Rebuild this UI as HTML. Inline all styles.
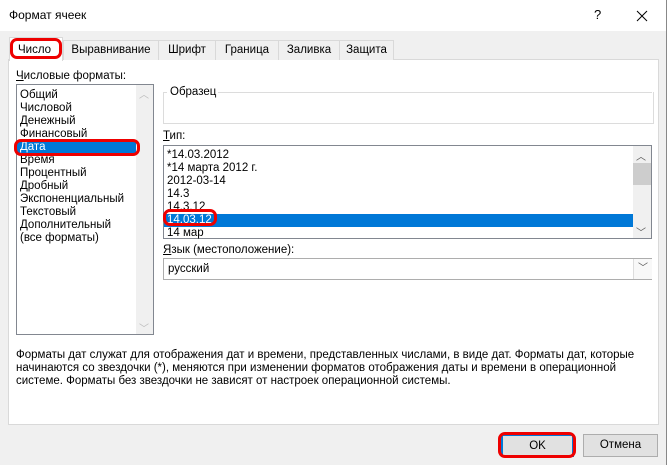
<!DOCTYPE html><html><head><meta charset="utf-8"><style>
body{margin:0;width:667px;height:465px;overflow:hidden;font-family:"Liberation Sans",sans-serif;font-size:11.5px;color:#000;background:#f0f0f0;position:relative}
.a{position:absolute}
.title{left:0;top:0;width:666px;height:31px;background:#fff}
.tab{top:40px;height:20px;border:1px solid #d9d9d9;border-bottom:none;background:#f0f0f0;text-align:center;line-height:19px;box-sizing:border-box}
.panel{left:8px;top:59px;width:651px;height:366px;background:#fff;border:1px solid #d9d9d9;box-sizing:border-box}
.list{border:1px solid #828790;background:#fff;box-sizing:border-box}
.row{height:13px;line-height:13px;padding-left:3px;white-space:nowrap}
.sel{background:#0078d7;color:#fff}
.red{border:3px solid #e00;border-radius:7px;box-sizing:border-box}
.btn{height:23px;border:1px solid #adadad;background:#e1e1e1;box-sizing:border-box;text-align:center;line-height:21px}
</style></head><body>
<div class="a" style="right:0;top:0;width:1px;height:465px;background:#888"></div>
<div class="a title"></div>
<div class="a" style="left:9px;top:8px;font-size:12px">Формат ячеек</div>
<div class="a" style="left:594px;top:7px;font-size:13px">?</div>
<svg class="a" style="left:636px;top:10px" width="12" height="12"><path d="M1 1L11 11M11 1L1 11" stroke="#000" stroke-width="1"/></svg>
<div class="a panel"></div>
<div class="a tab" style="left:63px;width:96px">Выравнивание</div>
<div class="a tab" style="left:158px;width:58px">Шрифт</div>
<div class="a tab" style="left:215px;width:64px">Граница</div>
<div class="a tab" style="left:278px;width:62px">Заливка</div>
<div class="a tab" style="left:339px;width:55px">Защита</div>
<div class="a" style="left:9px;top:37px;width:54px;height:24px;background:#fff;border:1px solid #d9d9d9;border-bottom:none;box-sizing:border-box"></div>
<div class="a" style="left:18px;top:44px">Число</div>
<div class="a red" style="left:10px;top:38px;width:52px;height:21px"></div>
<div class="a" style="left:16px;top:70px"><u>Ч</u>исловые форматы:</div>
<div class="a list" style="left:16px;top:84px;width:138px;height:251px;padding-top:4px">
<div class="row">Общий</div><div class="row">Числовой</div><div class="row">Денежный</div><div class="row">Финансовый</div><div class="row sel" style="margin-right:17px">Дата</div><div class="row">Время</div><div class="row">Процентный</div><div class="row">Дробный</div><div class="row">Экспоненциальный</div><div class="row">Текстовый</div><div class="row">Дополнительный</div><div class="row">(все форматы)</div>
</div>
<div class="a" style="left:136px;top:85px;width:17px;height:249px;background:#f0f0f0"></div>
<div class="a" style="left:139px;top:86px;color:#bbb;font-size:10px">︿</div>
<div class="a" style="left:139px;top:320px;color:#bbb;font-size:10px">﹀</div>
<div class="a red" style="left:14px;top:139px;width:126px;height:17px"></div>
<div class="a" style="left:163px;top:92px;width:489px;height:31px;border:1px solid #dcdcdc;border-top:none"></div>
<div class="a" style="left:163px;top:92px;width:4px;height:1px;background:#dcdcdc"></div>
<div class="a" style="left:218px;top:92px;width:434px;height:1px;background:#dcdcdc"></div>
<div class="a" style="left:170px;top:86px">Образец</div>
<div class="a" style="left:163px;top:130px"><u>Т</u>ип:</div>
<div class="a list" style="left:163px;top:145px;width:489px;height:94px;padding-top:3px">
<div class="row">*14.03.2012</div><div class="row">*14 марта 2012 г.</div><div class="row">2012-03-14</div><div class="row">14.3</div><div class="row">14.3.12</div><div class="row sel" style="margin-right:18px">14.03.12</div><div class="row">14 мар</div>
</div>
<div class="a" style="left:633px;top:146px;width:18px;height:92px;background:#f0f0f0"></div>
<div class="a" style="left:633px;top:163px;width:18px;height:22px;background:#cdcdcd"></div>
<div class="a" style="left:636px;top:148px;font-size:10px;color:#555">︿</div>
<div class="a" style="left:636px;top:224px;font-size:10px;color:#555">﹀</div>
<div class="a red" style="left:163px;top:209px;width:54px;height:17px"></div>
<div class="a" style="left:163px;top:244px"><u>Я</u>зык (местоположение):</div>
<div class="a" style="left:163px;top:258px;width:489px;height:22px;border:1px solid #adadad;box-sizing:border-box;background:#fff;padding:4px 0 0 4px">русский</div>
<div class="a" style="left:633px;top:259px;width:18px;height:20px;border-left:1px solid #ddd;background:#f8f8f8;text-align:center;font-size:10px;color:#555;line-height:20px">﹀</div>
<div class="a" style="left:16px;top:349px;width:640px;line-height:13px">Форматы дат служат для отображения дат и времени, представленных числами, в виде дат. Форматы дат, которые начинаются со звездочки (*), меняются при изменении форматов отображения даты и времени в операционной системе. Форматы без звездочки не зависят от настроек операционной системы.</div>
<div class="a btn" style="left:501px;top:434px;width:73px;border:2px solid #0078d7">OK</div>
<div class="a red" style="left:498px;top:432px;width:78px;height:26px"></div>
<div class="a btn" style="left:583px;top:434px;width:75px">Отмена</div>
</body></html>
